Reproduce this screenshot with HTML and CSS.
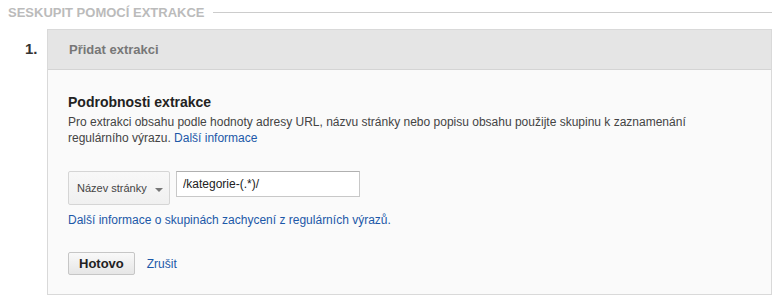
FILE: index.html
```html
<!DOCTYPE html>
<html lang="cs">
<head>
    <meta charset="UTF-8">
    <title>Seskupit pomocí extrakce</title>
    <link rel="stylesheet" href="styles.css">
</head>
<body>
    <div class="section-title">
        <span>SESKUPIT POMOCÍ EXTRAKCE</span>
        <div class="rule"></div>
    </div>

    <div class="step">
        <div class="step-num">1.</div>
        <div class="card">
            <div class="card-head">Přidat extrakci</div>
            <div class="card-body">
                <h3>Podrobnosti extrakce</h3>
                <p class="desc">Pro extrakci obsahu podle hodnoty adresy URL, názvu stránky nebo popisu obsahu použijte skupinu k zaznamenání regulárního výrazu. <a href="#">Další informace</a></p>

                <div class="fields">
                    <div class="dropdown">
                        <span>Název stránky</span>
                        <span class="caret"></span>
                    </div>
                    <input type="text" class="regex" value="/kategorie-(.*)/">
                </div>
                <a href="#" class="more">Další informace o skupinách zachycení z regulárních výrazů.</a>

                <div class="actions">
                    <button class="btn">Hotovo</button>
                    <a href="#">Zrušit</a>
                </div>
            </div>
        </div>
    </div>
</body>
</html>
```

FILE: styles.css
```css
body, html {
    margin: 0;
    padding: 0;
    font-family: Arial, 'Liberation Sans', sans-serif;
    color: #444;
    background: #fff;
}
a {
    color: #1c58a8;
    text-decoration: none;
}
.section-title {
    display: flex;
    align-items: center;
    padding: 4px 11px 0 8px;
    font-size: 13px;
    font-weight: bold;
    color: #bbb;
    line-height: 17px;
}
.section-title .rule {
    flex: 1;
    height: 1px;
    background: #ccc;
    margin-left: 9px;
}
.step {
    display: flex;
    margin-top: 8px;
    padding-right: 11px;
}
.step-num {
    width: 47px;
    box-sizing: border-box;
    padding: 11px 10px 0 25px;
    font-size: 15px;
    font-weight: bold;
    color: #333;
}
.card {
    flex: 1;
    border: 1px solid #d9d9d9;
    background: #fafafa;
}
.card-head {
    height: 40px;
    box-sizing: border-box;
    padding: 12px 21px 0;
    background: #e5e5e5;
    border-bottom: 1px solid #d4d4d4;
    font-size: 13px;
    font-weight: bold;
    color: #777;
}
.card-body {
    padding: 24px 20px 19px;
}
.card-body h3 {
    margin: 0 0 3px;
    font-size: 14px;
    color: #222;
    line-height: 17px;
}
.desc {
    max-width: 640px;
    margin: 0;
    font-size: 12px;
    line-height: 16px;
    color: #444;
}
.fields {
    display: flex;
    align-items: flex-start;
    gap: 6px;
    margin-top: 25px;
}
.dropdown {
    width: 102px;
    height: 34px;
    box-sizing: border-box;
    display: flex;
    align-items: center;
    gap: 8px;
    padding: 0 10px 0 8px;
    border: 1px solid #d5d5d5;
    border-radius: 2px;
    background: linear-gradient(#f8f8f8, #f0f0f0);
    font-size: 11px;
    color: #444;
    white-space: nowrap;
}
.dropdown span:first-child {
    flex: 1;
}
.caret {
    flex: none;
    width: 0;
    height: 0;
    border-left: 4px solid transparent;
    border-right: 4px solid transparent;
    border-top: 4px solid #777;
    margin-top: 3px;
}
.regex {
    width: 184px;
    height: 26px;
    box-sizing: border-box;
    margin: 0;
    padding: 0 6px;
    border: 1px solid #c8c8c8;
    border-top-color: #b0b0b0;
    background: #fff;
    font-family: Arial, 'Liberation Sans', sans-serif;
    font-size: 12px;
    color: #222;
}
.more {
    display: block;
    margin-top: 7px;
    font-size: 12px;
    line-height: 16px;
}
.actions {
    display: flex;
    align-items: center;
    gap: 12px;
    margin-top: 24px;
    font-size: 12px;
}
.btn {
    height: 23px;
    padding: 0 10px;
    border: 1px solid #c6c6c6;
    border-radius: 2px;
    background: linear-gradient(#f9f9f9, #e6e6e6);
    font-family: Arial, 'Liberation Sans', sans-serif;
    font-size: 13px;
    font-weight: bold;
    color: #222;
}
```
